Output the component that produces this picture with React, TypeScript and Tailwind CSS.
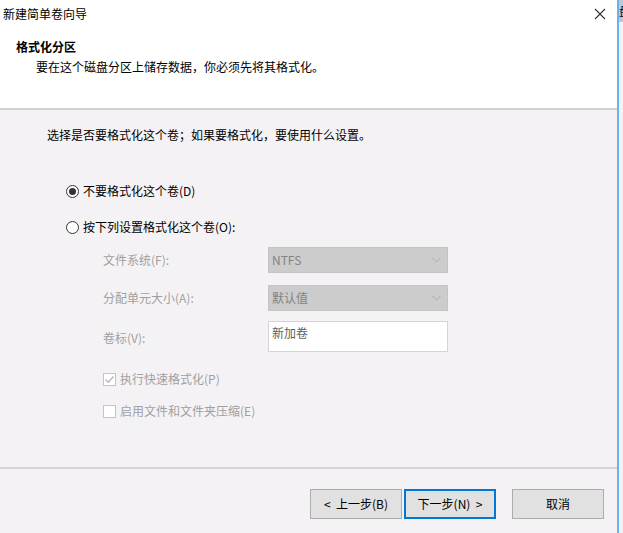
import React from 'react';

const font = { fontFamily: '"Noto Sans CJK SC", "Microsoft YaHei", sans-serif' };

function Radio({ checked, label }: { checked?: boolean; label: string }) {
  return (
    <div className="flex items-center h-4 gap-[4px]">
      <span className="w-[13px] h-[13px] rounded-full border border-[#333333] bg-white flex items-center justify-center">
        {checked && <span className="w-[7px] h-[7px] rounded-full bg-[#333333]" />}
      </span>
      <span className="text-[12px] leading-4 text-black">{label}</span>
    </div>
  );
}

function Check({ checked, label }: { checked?: boolean; label: string }) {
  return (
    <div className="flex items-center h-4 gap-[4px]">
      <span className="w-[13px] h-[13px] border border-[#c4c4c4] bg-white flex items-center justify-center">
        {checked && (
          <svg width="11" height="11" viewBox="0 0 11 11">
            <path d="M1.5 5.5 L4.3 8.3 L9.5 2.5" fill="none" stroke="#b4b4b4" strokeWidth="1.3" />
          </svg>
        )}
      </span>
      <span className="text-[12px] leading-4 text-[#a0a0a0]">{label}</span>
    </div>
  );
}

function Select({ value }: { value: string }) {
  return (
    <div className="w-[180px] h-[26px] bg-[#cccccc] border border-[#c4c4c4] flex items-center justify-between pl-[3px] pr-[6px]">
      <span className="text-[12px] text-[#838383]">{value}</span>
      <svg width="9" height="6" viewBox="0 0 9 6">
        <path d="M0.5 1 L4.5 5 L8.5 1" fill="none" stroke="#a8a8a8" strokeWidth="1" />
      </svg>
    </div>
  );
}

function Btn({ children, primary }: { children: React.ReactNode; primary?: boolean }) {
  return (
    <div
      className={
        'w-[92px] h-[30px] bg-[#e1e1e1] flex items-center justify-center text-[12px] text-black whitespace-pre ' +
        (primary ? 'border-2 border-[#0078d7]' : 'border border-[#adadad]')
      }
    >
      {children}
    </div>
  );
}

export default function App() {
  return (
    <div className="w-[623px] h-[533px] flex bg-white overflow-hidden" style={font}>
      <div className="w-[619px] shrink-0 h-full flex flex-col border-r-2 border-[#6fb1ea]">
        <div className="h-[110px] bg-white border-b-2 border-[#cfcfcf] flex flex-col">
          <div className="h-[28px] flex items-center justify-between pl-[3px] pr-[11px]">
            <span className="text-[12px] text-black">新建简单卷向导</span>
            <svg width="12" height="12" viewBox="0 0 12 12">
              <path d="M1 1 L11 11 M11 1 L1 11" stroke="#333333" strokeWidth="1.1" />
            </svg>
          </div>
          <div className="pl-[16px] pt-[11px] text-[12px] leading-4 font-bold text-black">格式化分区</div>
          <div className="pl-[36px] pt-[4px] text-[12px] leading-4 text-black">要在这个磁盘分区上储存数据，你必须先将其格式化。</div>
        </div>

        <div className="flex-1 bg-[#f5f2f5] border-b-2 border-[#d4d4d4] pl-[47px] pt-[17px]">
          <div className="text-[12px] leading-4 text-black">选择是否要格式化这个卷；如果要格式化，要使用什么设置。</div>
          <div className="pl-[19px] mt-[40px] flex flex-col gap-[20px]">
            <Radio checked label="不要格式化这个卷(D)" />
            <Radio label="按下列设置格式化这个卷(O):" />
          </div>
          <div className="pl-[56px] mt-[12px] grid grid-cols-[165px_180px] gap-y-[12px] items-center text-[12px] text-[#a0a0a0]">
            <span>文件系统(F):</span>
            <Select value="NTFS" />
            <span>分配单元大小(A):</span>
            <Select value="默认值" />
            <span className="self-center">卷标(V):</span>
            <div className="h-[31px] bg-white border border-[#d4d4d4] pl-[3px] pt-[2px] text-[#5e5e5e] -mt-[2px]">新加卷</div>
          </div>
          <div className="pl-[56px] mt-[19px] flex flex-col gap-[16px]">
            <Check checked label="执行快速格式化(P)" />
            <Check label="启用文件和文件夹压缩(E)" />
          </div>
        </div>

        <div className="h-[64px] bg-[#f5f2f5] flex items-start pt-[20px] pl-[310px]">
          <Btn>{'<  上一步(B)'}</Btn>
          <div className="ml-[2px]">
            <Btn primary>{'下一步(N)  >'}</Btn>
          </div>
          <div className="ml-[16px]">
            <Btn>取消</Btn>
          </div>
        </div>
      </div>
      <div className="flex-1 min-w-0 bg-[#f0f4f8] flex flex-col overflow-hidden">
        <div className="h-[22px] bg-[#b7cbe0] text-[12px] leading-[22px] text-black overflow-hidden whitespace-nowrap">盘</div>
      </div>
    </div>
  );
}
